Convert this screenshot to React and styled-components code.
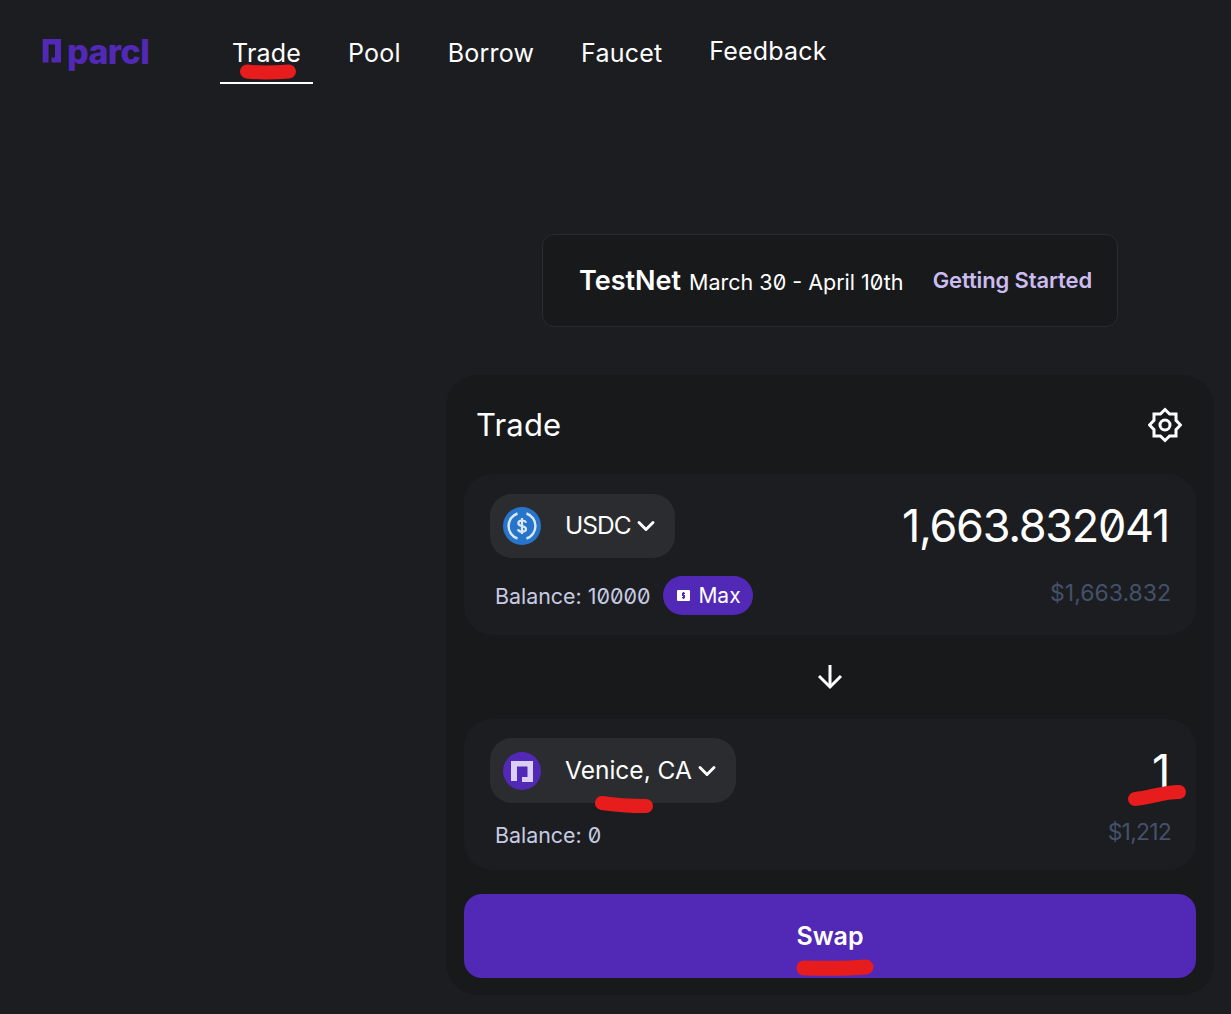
import React from "react";
import styled, { createGlobalStyle } from "styled-components";
import { ChevronDown } from "lucide-react";

const FONT = `Inter, "Open Sans", "Liberation Sans", sans-serif`;

const GlobalStyle = createGlobalStyle`
    html, body {
        margin: 0;
        padding: 0;
        background: #1c1d21;
    }
    body {
        font-family: ${FONT};
        font-feature-settings: "zero" 1;
        color: #fff;
    }
    * {
        box-sizing: border-box;
    }
`;

const LogoMark = () => (
    <svg width="23" height="24" viewBox="0 0 23 24">
        <path fill="#5229b6" d="M0.700 0H19V23.500H9.500V18.500H13V5.500H6.500V23.500H0.700Z" />
    </svg>
);

const SettingsIcon = () => (
    <svg width="34" height="36" viewBox="-17 -18 34 36" fill="none" stroke="#fff" strokeWidth="3">
        <path d="M0 -15.500L4.600 -11H11V-4.600L15.500 0L11 4.600V11H4.600L0 15.500L-4.600 11H-11V4.600L-15.500 0L-11 -4.600V-11H-4.600Z" />
        <circle r="5" />
    </svg>
);

const UsdcIcon = () => (
    <svg width="38" height="38" viewBox="0 0 38 38" fill="none">
        <circle cx="19" cy="19" r="19" fill="#2775ca" />
        <path d="M14.500 6.500a13.200 13.200 0 0 0 0 25M23.500 6.500a13.200 13.200 0 0 1 0 25" stroke="#dbe8f7" strokeWidth="2.400" />
        <path
            d="M23 15.800c-.4-1.500-1.900-2.300-3.900-2.300-2.200 0-3.800 1-3.800 2.700 0 3.900 7.700 2 7.700 5.800 0 1.800-1.700 2.700-3.900 2.700-2.100 0-3.700-.8-4.100-2.500M19 11v16"
            stroke="#dbe8f7"
            strokeWidth="2.200"
        />
    </svg>
);

const ParclIcon = () => (
    <svg width="38" height="38" viewBox="0 0 38 38">
        <circle cx="19" cy="19" r="19" fill="#5229b6" />
        <path fill="#dccff5" d="M8 9H30V30H19V25H24.500V14.500H14V29H8Z" />
    </svg>
);

const MaxIcon = () => (
    <svg width="13" height="11" viewBox="0 0 13 11" fill="none">
        <rect width="13" height="11" rx="1" fill="#fff" />
        <path d="M8 3.300H5.600V5.500H7.400V7.700H5" stroke="#5229b6" strokeWidth="1.200" />
        <path d="M6.500 2V9" stroke="#5229b6" strokeWidth="1" />
    </svg>
);

const DownArrow = () => (
    <svg width="26" height="26" viewBox="0 0 26 26" fill="none" stroke="#fff" strokeWidth="3">
        <path d="M13 1V23" />
        <path d="M2 12L13 23L24 12" />
    </svg>
);

const Scribbles = () => (
    <ScribbleLayer viewBox="0 0 1231 1014">
        <path d="M247 71.500C260 73 275 72.500 289 71.500" strokeWidth="14" />
        <path d="M602 803C618 805.500 632 806 646 806" strokeWidth="14" />
        <path d="M1135 799C1150 798 1162 792 1179 792" strokeWidth="14" />
        <path d="M804 968C825 968.500 850 968.500 866 967" strokeWidth="15" />
    </ScribbleLayer>
);

const App = () => {
    return (
        <Page>
            <GlobalStyle />
            <Header>
                <Logo>
                    <LogoMark />
                    <LogoText>parcl</LogoText>
                </Logo>
                <Nav>
                    <NavItem $active>Trade</NavItem>
                    <NavItem>Pool</NavItem>
                    <NavItem>Borrow</NavItem>
                    <NavItem>Faucet</NavItem>
                    <NavItem $raised>Feedback</NavItem>
                </Nav>
            </Header>
            <Main>
                <Banner>
                    <BannerTitle>TestNet</BannerTitle>
                    <BannerDates>March 30 - April 10th</BannerDates>
                    <BannerLink>Getting Started</BannerLink>
                </Banner>
                <Card>
                    <CardHeader>
                        <CardTitle>Trade</CardTitle>
                        <SettingsIcon />
                    </CardHeader>
                    <Panel $height={161} $top={20} $bottom={20}>
                        <PanelRow>
                            <TokenPill $height={64}>
                                <UsdcIcon />
                                <TokenName $tight>USDC</TokenName>
                                <Chevron size={28} strokeWidth={2.5} />
                            </TokenPill>
                            <Amount>1,663.832041</Amount>
                        </PanelRow>
                        <PanelRow>
                            <BalanceGroup>
                                <Balance>Balance: 10000</Balance>
                                <MaxButton>
                                    <MaxIcon />
                                    Max
                                </MaxButton>
                            </BalanceGroup>
                            <Fiat>$1,663.832</Fiat>
                        </PanelRow>
                    </Panel>
                    <ArrowRow>
                        <DownArrow />
                    </ArrowRow>
                    <Panel $height={151} $top={19} $bottom={18}>
                        <PanelRow>
                            <TokenPill $height={65}>
                                <ParclIcon />
                                <TokenName>Venice, CA</TokenName>
                                <Chevron size={28} strokeWidth={2.5} />
                            </TokenPill>
                            <Amount>1</Amount>
                        </PanelRow>
                        <PanelRow>
                            <Balance>Balance: 0</Balance>
                            <Fiat $tight>$1,212</Fiat>
                        </PanelRow>
                    </Panel>
                    <SwapButton>Swap</SwapButton>
                </Card>
            </Main>
            <Scribbles />
        </Page>
    );
};

export default App;

const Page = styled.div`
    position: relative;
    width: 1231px;
    height: 1014px;
    overflow: hidden;
    background: #1c1d21;
`;
const Header = styled.header`
    display: flex;
    align-items: flex-start;
    height: 234px;
    padding: 17px 0 0 42px;
`;
const Logo = styled.div`
    display: flex;
    align-items: flex-start;
    gap: 2px;
    width: 178px;
    padding-top: 22px;
    color: #5229b6;
`;
const LogoText = styled.span`
    font-size: 34px;
    font-weight: 800;
    line-height: 25px;
    letter-spacing: -0.6px;
`;
const Nav = styled.nav`
    display: flex;
    gap: 23px;
`;
const NavItem = styled.div`
    padding: 0 12px;
    height: 67px;
    line-height: ${(props) => (props.$raised ? "68px" : "72px")};
    font-size: 25px;
    font-weight: 400;
    letter-spacing: 0.2px;
    border-bottom: 2px solid ${(props) => (props.$active ? "#fff" : "transparent")};
`;
const Main = styled.main`
    display: flex;
    flex-direction: column;
    align-items: center;
    width: 768px;
    margin-left: 446px;
`;
const Banner = styled.div`
    display: flex;
    align-items: center;
    width: 576px;
    height: 93px;
    padding: 0 25px 0 36px;
    margin-bottom: 48px;
    background: #18191b;
    border: 1px solid #2a2b2f;
    border-radius: 12px;
`;
const BannerTitle = styled.span`
    font-size: 27px;
    font-weight: 600;
    margin-right: 8px;
`;
const BannerDates = styled.span`
    font-size: 21.500px;
    padding-top: 3px;
`;
const BannerLink = styled.span`
    margin-left: auto;
    padding-bottom: 2px;
    font-size: 22px;
    font-weight: 600;
    letter-spacing: -0.12px;
    color: #cbbdf0;
`;
const Card = styled.section`
    width: 768px;
    height: 620px;
    padding: 0 18px;
    background: #18191b;
    border-radius: 32px;
`;
const CardHeader = styled.div`
    display: flex;
    justify-content: space-between;
    align-items: center;
    height: 99px;
    padding: 0 14px 0 12px;
`;
const CardTitle = styled.h2`
    margin: 0;
    font-size: 31px;
    font-weight: 400;
    letter-spacing: 0.2px;
`;
const Panel = styled.div`
    display: flex;
    flex-direction: column;
    justify-content: space-between;
    height: ${(props) => props.$height}px;
    padding: ${(props) => props.$top}px 26px ${(props) => props.$bottom}px;
    background: #1c1d21;
    border-radius: 28px;
`;
const PanelRow = styled.div`
    display: flex;
    justify-content: space-between;
    align-items: center;
`;
const TokenPill = styled.div`
    display: flex;
    align-items: center;
    height: ${(props) => props.$height}px;
    padding: 0 21px 0 13px;
    background: #2b2c2f;
    border-radius: 22px;
`;
const TokenName = styled.span`
    margin: 0 7px 0 24px;
    padding-bottom: 2px;
    font-size: 24.500px;
    letter-spacing: ${(props) => (props.$tight ? "-1px" : "0")};
`;
const Chevron = styled(ChevronDown)`
    margin: 0 -6px;
`;
const Amount = styled.div`
    margin-right: 1px;
    font-size: 45px;
    font-weight: 400;
    line-height: 56px;
    letter-spacing: -1.3px;
`;
const BalanceGroup = styled.div`
    display: flex;
    align-items: center;
    gap: 13px;
`;
const Balance = styled.span`
    padding-left: 5px;
    font-size: 21.400px;
    color: #c7cbe2;
`;
const MaxButton = styled.div`
    display: flex;
    align-items: center;
    gap: 8px;
    height: 39px;
    padding: 0 12px 0 14px;
    font-size: 21px;
    background: #5229b6;
    border-radius: 20px;
`;
const Fiat = styled.span`
    margin: 0 -1px 6px 0;
    font-size: 23px;
    letter-spacing: ${(props) => (props.$tight ? "-0.8px" : "0")};
    color: #44516a;
`;
const ArrowRow = styled.div`
    display: flex;
    justify-content: center;
    align-items: center;
    height: 84px;
`;
const SwapButton = styled.div`
    display: flex;
    justify-content: center;
    align-items: center;
    height: 84px;
    margin-top: 24px;
    font-size: 25px;
    font-weight: 600;
    background: #5229b6;
    border-radius: 18px;
`;
const ScribbleLayer = styled.svg`
    position: absolute;
    inset: 0;
    width: 1231px;
    height: 1014px;
    pointer-events: none;
    fill: none;
    stroke: #e71c1c;
    stroke-linecap: round;
`;
